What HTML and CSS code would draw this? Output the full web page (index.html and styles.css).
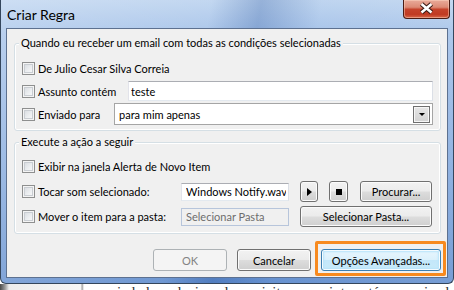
FILE: index.html
```html
<!DOCTYPE html>
<html lang="pt-BR">
<head>
    <meta charset="UTF-8">
    <meta name="viewport" content="width=device-width, initial-scale=1.0">
    <title>Criar Regra</title>
    <link rel="stylesheet" href="styles.css">
</head>
<body>
    <div class="desktop">
        <div class="window">
            <div class="title-bar">
                <span class="title">Criar Regra</span>
                <div class="close-btn">
                    <svg width="47" height="19" viewBox="0 0 47 19">
                        <path d="M18.5 5 L28.5 13.5 M28.5 5 L18.5 13.5" stroke="#3b1a14" stroke-width="4.8" fill="none"/>
                        <path d="M18.5 5 L28.5 13.5 M28.5 5 L18.5 13.5" stroke="#ffffff" stroke-width="2.6" fill="none"/>
                    </svg>
                </div>
            </div>

            <div class="client">
                <!-- condições -->
                <fieldset class="group group-cond">
                    <legend>Quando eu receber um email com todas as condições selecionadas</legend>
                    <div class="row">
                        <label class="check"><input type="checkbox" class="chk">De Julio Cesar Silva Correia</label>
                    </div>
                    <div class="row">
                        <label class="check lbl-assunto"><input type="checkbox" class="chk">Assunto contém</label>
                        <input type="text" class="textbox" value="teste">
                    </div>
                    <div class="row">
                        <label class="check lbl-enviado"><input type="checkbox" class="chk">Enviado para</label>
                        <div class="combo">
                            <span class="combo-text">para mim apenas</span>
                            <span class="combo-drop"><span class="arrow-down"></span></span>
                        </div>
                    </div>
                </fieldset>

                <!-- ações -->
                <fieldset class="group group-acao">
                    <legend>Execute a ação a seguir</legend>
                    <div class="row">
                        <label class="check"><input type="checkbox" class="chk">Exibir na janela Alerta de Novo Item</label>
                    </div>
                    <div class="row">
                        <label class="check lbl-acao"><input type="checkbox" class="chk">Tocar som selecionado:</label>
                        <input type="text" class="textbox small" value="Windows Notify.wav">
                        <button class="btn btn-icon btn-play"><span class="icon-play"></span></button>
                        <button class="btn btn-icon btn-stop"><span class="icon-stop"></span></button>
                        <button class="btn btn-procurar">Procurar...</button>
                    </div>
                    <div class="row">
                        <label class="check lbl-acao"><input type="checkbox" class="chk">Mover o item para a pasta:</label>
                        <input type="text" class="textbox small" value="Selecionar Pasta" disabled>
                        <button class="btn btn-pasta">Selecionar Pasta...</button>
                    </div>
                </fieldset>

                <div class="dialog-buttons">
                    <button class="btn btn-dialog" disabled>OK</button>
                    <button class="btn btn-dialog">Cancelar</button>
                    <button class="btn btn-default">Opções Avançadas...</button>
                </div>
            </div>
        </div>

        <div class="behind">
            <span class="behind-text">sociedades relacionadas, sujeito no recinto está comunicado</span>
        </div>
    </div>
</body>
</html>
```

FILE: styles.css
```css
* {
    box-sizing: border-box;
}
body {
    margin: 0;
    width: 454px;
    height: 290px;
    overflow: hidden;
    background: #ffffff;
    font-family: Lato, 'Liberation Sans', sans-serif;
    font-size: 11px;
    color: #000;
}
.desktop {
    display: flex;
    flex-direction: column;
    height: 290px;
}
.window {
    flex: none;
    width: 454px;
    height: 284px;
    display: flex;
    flex-direction: column;
    padding: 0 5px 5px 5px;
    border: 1px solid #34465c;
    border-top: none;
    border-radius: 0 0 6px 6px;
    background:
        linear-gradient(100deg, rgba(255,255,255,0.25) 0%, rgba(255,255,255,0.1) 42%, rgba(40,80,150,0.25) 52%, rgba(255,255,255,0.05) 64%, rgba(255,255,255,0.15) 100%),
        linear-gradient(#bcd3ef 0%, #a2c0e8 12%, #7fa6dc 60%, #5f8ccd 100%);
}
.title-bar {
    height: 28px;
    display: flex;
    align-items: center;
    padding-left: 1px;
}
.title {
    font-size: 14px;
    color: #000;
    margin-top: 1px;
}
.close-btn {
    margin-left: auto;
    margin-right: -2px;
    align-self: flex-start;
    width: 47px;
    height: 19px;
    border: 1px solid #4a1c14;
    border-top: none;
    border-radius: 0 0 4px 4px;
    background: linear-gradient(#e9ab9a 0%, #dc8a75 40%, #c5432b 52%, #c03a22 80%, #d8674a 100%);
    box-shadow: inset 0 0 0 1px rgba(255,220,200,0.45);
}
.close-btn svg {
    display: block;
    margin: -1px 0 0 -1px;
}
.client {
    flex: 1;
    display: flex;
    flex-direction: column;
    padding: 7px 6px 6px 7px;
    border: 1px solid #5d7190;
    background: #f0f0f0;
}
.group {
    margin: 0;
    min-width: 0;
    border: 1px solid #d5dfe5;
    border-radius: 3px;
    box-shadow: inset 0 0 0 1px #ffffff;
    display: flex;
    flex-direction: column;
}
.group legend {
    margin-left: 4px;
    padding: 0 2px;
    line-height: 14px;
    background: #f0f0f0;
}
.group-cond {
    padding: 7px 7px 5px 0;
    gap: 1px;
}
.group-cond .row {
    height: 22px;
}
.group-acao {
    margin-top: 4px;
    padding: 7px 7px 6px 0;
    gap: 4px;
}
.group-acao .row {
    height: 21px;
}
.row {
    display: flex;
    align-items: center;
    padding-left: 7px;
}
.check {
    display: flex;
    align-items: center;
    flex: none;
    white-space: nowrap;
}
.lbl-assunto {
    width: 106px;
}
.lbl-enviado {
    width: 92px;
}
.lbl-acao {
    width: 159px;
}
.chk {
    appearance: none;
    -webkit-appearance: none;
    width: 13px;
    height: 13px;
    margin: 0 3px 0 0;
    border: 1px solid #8e8f8f;
    background: linear-gradient(135deg, #d3d7dc 0%, #eef0f2 60%, #fbfbfb 100%);
    box-shadow: inset 0 0 0 1px #f4f4f4, inset 0 0 0 2px #c9cdd2;
}
.textbox {
    flex: 1;
    min-width: 0;
    height: 20px;
    padding: 0 2px;
    border: 1px solid #abadb3;
    border-color: #abadb3 #dbdfe6 #e3e9ef #e2e3ea;
    background: #fff;
    font-family: inherit;
    font-size: 11px;
    color: #000;
    outline: none;
}
.textbox.small {
    flex: none;
    width: 108px;
    height: 18px;
    padding: 0 2px 0 4px;
}
.textbox:disabled {
    background: #f0f0f0;
    border-color: #b7c5db;
    color: #6d6d6d;
}
.combo {
    flex: 1;
    height: 22px;
    display: flex;
    align-items: center;
    padding: 0 2px 0 4px;
    border: 1px solid #a5a5a5;
    background: #fff;
}
.combo-text {
    flex: 1;
}
.combo-drop {
    width: 17px;
    height: 17px;
    display: flex;
    align-items: center;
    justify-content: center;
    border: 1px solid #6f6f6f;
    background: linear-gradient(#e6e6e6, #d2d2d2);
    box-shadow: inset 0 0 0 1px #f6f6f6;
}
.arrow-down {
    width: 0;
    height: 0;
    border-left: 3px solid transparent;
    border-right: 3px solid transparent;
    border-top: 3px solid #000;
}
.btn {
    height: 21px;
    padding: 0;
    border: 1px solid #707070;
    border-radius: 3px;
    background: linear-gradient(#f2f2f2 0%, #ebebeb 49%, #dddddd 51%, #cfcfcf 100%);
    box-shadow: inset 0 0 0 1px #fbfbfb;
    font-family: inherit;
    font-size: 11px;
    color: #000;
    display: flex;
    align-items: center;
    justify-content: center;
    flex: none;
}
.btn-icon {
    margin-left: 11px;
}
.btn-play {
    width: 18px;
}
.btn-stop {
    width: 19px;
}
.icon-play {
    width: 0;
    height: 0;
    border-top: 4.5px solid transparent;
    border-bottom: 4.5px solid transparent;
    border-left: 5px solid #000;
    margin-left: 1px;
}
.icon-stop {
    width: 6px;
    height: 6px;
    background: #000;
}
.btn-procurar {
    width: 72px;
    margin-left: 12px;
}
.btn-pasta {
    width: 132px;
    margin-left: 11px;
}
.dialog-buttons {
    margin-top: auto;
    display: flex;
    justify-content: flex-end;
    gap: 10px;
}
.dialog-buttons .btn {
    height: 22px;
}
.btn-dialog {
    width: 74px;
}
.btn:disabled {
    border-color: #adb2b5;
    background: #f4f4f4;
    box-shadow: none;
    color: #838383;
}
.btn-default {
    width: 120px;
    position: relative;
    border-color: #3c7fb1;
    background: linear-gradient(#e9f6fd 0%, #dbf1fc 49%, #c3e7fa 51%, #c9eaf9 100%);
    box-shadow: inset 0 0 0 1px #f4fbff, inset 0 0 2px 2px #b6e3fa;
}
/* marcação laranja em volta do botão */
.btn-default::after {
    content: '';
    position: absolute;
    left: -7px;
    right: -6px;
    top: -9px;
    bottom: -6px;
    border: 3px solid #f78a1f;
    border-radius: 2px;
}
.behind {
    flex: 1;
    overflow: hidden;
    background: linear-gradient(to right, #4a4a4a 0px, #9a9a9a 5px, #ececec 9px, #f6f6f6 81px, #9c9c9c 82px, #ffffff 84px);
    padding-left: 97px;
}
.behind-text {
    display: block;
    font-family: 'Liberation Serif', serif;
    font-size: 15px;
    line-height: 15px;
    margin-top: 1px;
    color: #333;
    white-space: nowrap;
}
```
